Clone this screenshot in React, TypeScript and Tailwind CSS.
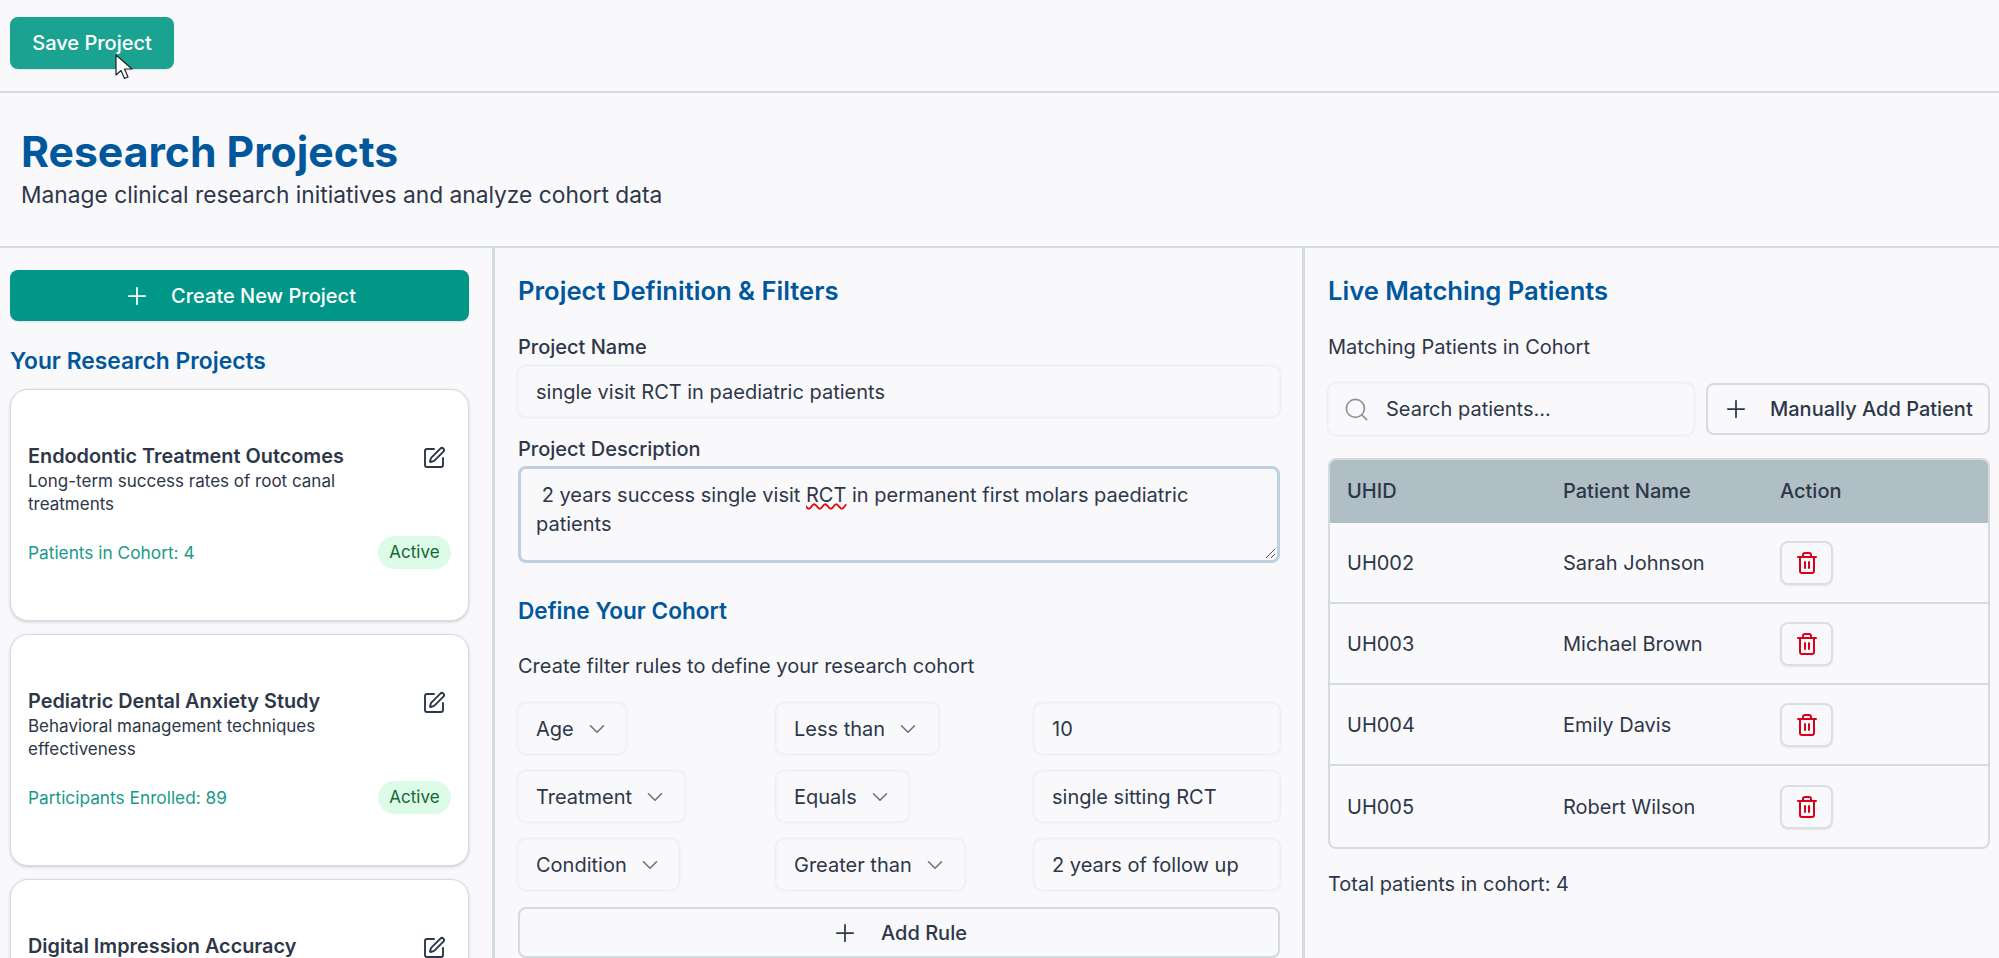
import React from "react";
import { Plus, Search, ChevronDown, SquarePen, Trash2 } from "lucide-react";

const rules = [
  { a: "Age", aw: "w-[108px]", b: "Less than", bw: "w-[163px]", v: "10" },
  { a: "Treatment", aw: "w-[167px]", b: "Equals", bw: "w-[133px]", v: "single sitting RCT" },
  { a: "Condition", aw: "w-[161px]", b: "Greater than", bw: "w-[189px]", v: "2 years of follow up" },
];
const patients = [
  ["UH002", "Sarah Johnson"],
  ["UH003", "Michael Brown"],
  ["UH004", "Emily Davis"],
  ["UH005", "Robert Wilson"],
];
const field = "rounded-lg bg-[#f9f9fc] shadow-[0_0_3px_rgba(120,130,150,0.2)] border border-[#f3f5f8]";
const chevron = "w-[26px] h-[26px] text-[#6b7480] shrink-0";

function Card({ title, l1, l2, stat }: { title: string; l1: string; l2: string; stat: string }) {
  return (
    <div className="h-[232px] shrink-0 rounded-[18px] border border-[#d5dbe1] bg-white shadow-[0_1px_3px_rgba(60,70,90,0.25)] px-[17px] pt-[53px]">
      <div className="flex justify-between items-start">
        <div className="text-[19.85px] leading-[27px] font-semibold text-[#2d3748]">{title}</div>
        <SquarePen className="w-[24px] h-[24px] mt-[3px] mr-[5px] text-[#2d3748]" strokeWidth={1.9} />
      </div>
      <div className="text-[17px] leading-[23px] text-[#2d3748]">{l1}<br />{l2}</div>
      <div className="flex justify-between items-center mt-[20px]">
        <span className="text-[17.3px] text-[#1a9a8a]">{stat}</span>
        <span className="h-[33px] w-[73px] rounded-full bg-[#dcfce7] text-[#166534] text-[17px] flex items-center justify-center">Active</span>
      </div>
    </div>
  );
}

export default function App() {
  return (
    <div className="relative h-[958px] w-[1999px] overflow-hidden bg-[#f9f9fc] text-[#2d3748] text-[20px] font-['Inter',sans-serif]">
      <div className="h-[93px] border-b-2 border-[#d4dbdf] pl-[10px] pt-[17px]">
        <button className="h-[52px] w-[164px] rounded-lg bg-[#1ba392] text-white font-medium text-[20px] shadow-[0_1px_2px_rgba(0,0,0,0.1)]">Save Project</button>
      </div>
      <div className="h-[155px] border-b-2 border-[#d4dbdf] pl-[21px] pt-[31px]">
        <h1 className="text-[42.7px] leading-[56px] font-bold text-[#01579b]">Research Projects</h1>
        <p className="text-[22.75px] leading-[30px] text-[#2d3748]">Manage clinical research initiatives and analyze cohort data</p>
      </div>
      <div className="flex h-[710px]">
        <aside className="w-[495px] shrink-0 border-r-[3px] border-[#d4dbdf] pl-[10px] pr-[23px] pt-[22px] overflow-hidden">
          <button className="h-[51px] w-full rounded-lg bg-[#009688] text-white font-medium text-[20px] flex items-center justify-center gap-[20px] shadow-[0_1px_2px_rgba(0,0,0,0.1)]">
            <Plus className="w-[28px] h-[28px]" strokeWidth={1.5} />
            Create New Project
          </button>
          <h3 className="mt-[25px] text-[22.8px] leading-[30px] font-semibold text-[#01579b]">Your Research Projects</h3>
          <div className="mt-[13px] flex flex-col gap-[13px]">
            <Card title="Endodontic Treatment Outcomes" l1="Long-term success rates of root canal" l2="treatments" stat="Patients in Cohort: 4" />
            <Card title="Pediatric Dental Anxiety Study" l1="Behavioral management techniques" l2="effectiveness" stat="Participants Enrolled: 89" />
            <Card title="Digital Impression Accuracy" l1="" l2="" stat="" />
          </div>
        </aside>
        <main className="w-[810px] shrink-0 border-r-[3px] border-[#d4dbdf] pl-[23px] pr-[22px] pt-[25px] overflow-hidden">
          <h2 className="text-[25.6px] leading-[36px] font-semibold text-[#01579b]">Project Definition &amp; Filters</h2>
          <label className="block mt-[25px] leading-[26px] font-medium">Project Name</label>
          <div className={`${field} mt-[6px] h-[51px] px-[17px] flex items-center`}>single visit RCT in paediatric patients</div>
          <label className="block mt-[19px] leading-[26px] font-medium">Project Description</label>
          <div className="relative mt-[4px] h-[97px] rounded-lg border-[3px] border-[#bdd1e2] px-[15px] pt-[12px] leading-[29px] bg-[#f9f9fc]">
            <span className="whitespace-pre"> 2 years success single visit <span className="underline decoration-wavy decoration-[#e01010] decoration-[1.5px]">RCT</span> in permanent first molars paediatric</span>
            <br />patients
            <svg className="absolute right-[1px] bottom-[1px] w-[11px] h-[11px] text-[#555]" viewBox="0 0 11 11" fill="none" stroke="currentColor" strokeWidth="1"><path d="M1 10 10 1M6 10l4-4" /></svg>
          </div>
          <h3 className="mt-[33px] text-[22.6px] leading-[30px] font-semibold text-[#01579b]">Define Your Cohort</h3>
          <p className="mt-[27px] leading-[27px]">Create filter rules to define your research cohort</p>
          <div className="mt-[23px] flex flex-col gap-[17px]">
            {rules.map((r) => (
              <div key={r.a} className="grid grid-cols-3 gap-[12px]">
                <div className={`${field} ${r.aw} h-[51px] pl-[17px] flex items-center gap-[10px]`}>{r.a}<ChevronDown className={chevron} strokeWidth={1.5} /></div>
                <div className={`${field} ${r.bw} h-[51px] pl-[17px] flex items-center gap-[10px]`}>{r.b}<ChevronDown className={chevron} strokeWidth={1.5} /></div>
                <div className={`${field} h-[51px] pl-[17px] flex items-center`}>{r.v}</div>
              </div>
            ))}
          </div>
          <button className="mt-[17px] h-[51px] w-full rounded-lg border-2 border-[#d4dbdf] font-medium flex items-center justify-center gap-[22px]">
            <Plus className="w-[28px] h-[28px]" strokeWidth={1.5} />
            Add Rule
          </button>
        </main>
        <section className="flex-1 pl-[23px] pr-[9px] pt-[25px]">
          <h2 className="text-[25.6px] leading-[36px] font-semibold text-[#01579b]">Live Matching Patients</h2>
          <p className="mt-[25px] leading-[26px]">Matching Patients in Cohort</p>
          <div className="mt-[23px] flex gap-[12px]">
            <div className={`${field} h-[52px] w-[366px] pl-[14px] flex items-center gap-[16px]`}>
              <Search className="w-[27px] h-[27px] text-[#8a929c]" strokeWidth={1.5} />
              Search patients...
            </div>
            <button className="h-[52px] flex-1 rounded-lg border-2 border-[#d4dbdf] font-medium flex items-center pl-[14px] gap-[20px]">
              <Plus className="w-[28px] h-[28px]" strokeWidth={1.5} />
              Manually Add Patient
            </button>
          </div>
          <div className="mt-[23px] rounded-lg border-2 border-[#d4dbdf] overflow-hidden">
            <div className="grid grid-cols-[216px_217px_1fr] h-[63px] pb-[2px] items-center bg-[#b0bec5] font-medium pl-[17px]">
              <span>UHID</span><span>Patient Name</span><span>Action</span>
            </div>
            {patients.map((p, i) => (
              <div key={p[0]} className={`grid grid-cols-[216px_217px_1fr] h-[81px] items-center pl-[17px] ${i < 3 ? "border-b-2 border-[#d4dbdf]" : ""}`}>
                <span>{p[0]}</span><span>{p[1]}</span>
                <button className="w-[53px] h-[44px] rounded-lg border-2 border-[#d9dfe4] shadow-[0_1px_2px_rgba(0,0,0,0.08)] flex items-center justify-center">
                  <Trash2 className="w-[24px] h-[24px] text-[#d9001b]" strokeWidth={2} />
                </button>
              </div>
            ))}
          </div>
          <p className="mt-[22px] leading-[27px]">Total patients in cohort: 4</p>
        </section>
      </div>
      <svg className="absolute left-[115px] top-[54px] w-[20px] h-[28px]" viewBox="0 0 20 28">
        <path d="M1 1v20l5-4.5 3.5 8 3.5-1.5-3.5-8H17Z" fill="#fff" stroke="#222" strokeWidth="1.2" strokeLinejoin="round" />
      </svg>
    </div>
  );
}
